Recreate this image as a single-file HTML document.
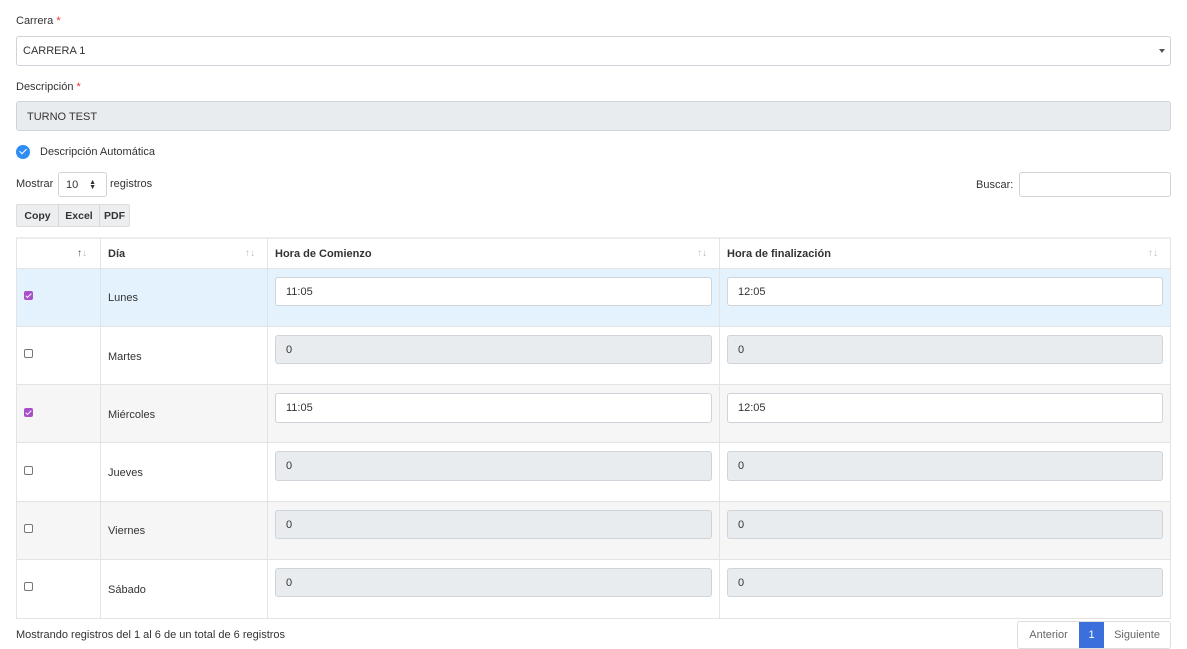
<!DOCTYPE html><html><head><style>
body{margin:0;width:1187px;height:649px;background:#fff;font-family:"Liberation Sans",sans-serif;color:#333;font-size:11px;position:relative;overflow:hidden}
.a{position:absolute}
.inp{position:absolute;box-sizing:border-box;border:1px solid #ced4da;border-radius:3px;background:#fff;font-size:11px;padding-left:10px;display:flex;align-items:center;color:#333}
.dis{background:#e9ecef}
.cb{position:absolute;width:9px;height:9px;border:1px solid #777;border-radius:2px;box-sizing:border-box;background:#fff}
.cb.on{background:#a94fc9;border-color:#a94fc9}
.cb.on:after{content:"";position:absolute;left:2px;top:0px;width:2px;height:5px;border:solid #fff;border-width:0 1.5px 1.5px 0;transform:rotate(45deg)}
.row{position:absolute;left:16px;width:1155px;border-bottom:1px solid #e3e3e3;box-sizing:border-box}
.vl{position:absolute;top:238px;height:380px;border-left:1px solid #e3e3e3}
.ar{position:absolute;color:#bbb;font-size:10px}
</style></head><body>
<div class="a" style="left:16px;top:15px">Carrera <span style="color:#e33">*</span></div>
<div class="inp" style="left:16px;top:36px;width:1155px;height:30px;padding-left:6px">CARRERA 1<span style="position:absolute;right:5px;top:12px;border:3px solid transparent;border-top:4px solid #555"></span></div>
<div class="a" style="left:16px;top:81px">Descripción <span style="color:#e33">*</span></div>
<div class="inp dis" style="left:16px;top:101px;width:1155px;height:30px;padding-top:1px">TURNO TEST</div>
<div class="a" style="left:16px;top:145px;width:14px;height:14px;border-radius:50%;background:#2f8cf5"><div style="position:absolute;left:5px;top:2px;width:3px;height:6px;border:solid #fff;border-width:0 1.5px 1.5px 0;transform:rotate(45deg)"></div></div>
<div class="a" style="left:40px;top:146px">Descripción Automática</div>
<div class="a" style="left:16px;top:178px">Mostrar</div>
<div class="inp" style="left:58px;top:172px;width:49px;height:25px;padding-left:7px">10<span style="position:absolute;right:10px;top:7px;font-size:7px;line-height:5px">▲<br>▼</span></div>
<div class="a" style="left:110px;top:178px">registros</div>
<div class="a" style="left:976px;top:179px">Buscar:</div>
<div class="inp" style="left:1019px;top:172px;width:152px;height:25px"></div>
<div class="a" style="left:16px;top:204px;width:114px;height:23px;background:#eceeef;border:1px solid #ddd;box-sizing:border-box;border-radius:2px;font-weight:bold;font-size:10.5px;display:flex">
<div style="width:41px;text-align:center;line-height:22px;border-right:1px solid #d6d6d6">Copy</div><div style="width:40px;text-align:center;line-height:22px;border-right:1px solid #d6d6d6">Excel</div><div style="flex:1;text-align:center;line-height:22px">PDF</div></div>
<div class="row" style="top:238px;height:31px"></div>
<div class="row" style="top:269px;height:58px;background:#e3f2fd"></div>
<div class="row" style="top:327px;height:58px"></div>
<div class="row" style="top:385px;height:58px;background:#f6f6f6"></div>
<div class="row" style="top:443px;height:59px"></div>
<div class="row" style="top:502px;height:58px;background:#f6f6f6"></div>
<div class="row" style="top:560px;height:58px;border:0"></div>
<div class="a" style="left:16px;top:237px;width:1155px;height:382px;border:1px solid #e3e3e3;box-sizing:border-box;border-top:2px solid #eee"></div>
<div class="vl" style="left:100px"></div><div class="vl" style="left:267px"></div><div class="vl" style="left:719px"></div>
<div class="ar" style="left:77px;top:248px"><span style="color:#444">↑</span>↓</div>
<div class="ar" style="left:245px;top:248px">↑↓</div><div class="ar" style="left:697px;top:248px">↑↓</div><div class="ar" style="left:1148px;top:248px">↑↓</div>
<div class="a" style="left:108px;top:248px;font-weight:bold">Día</div>
<div class="a" style="left:275px;top:248px;font-weight:bold">Hora de Comienzo</div>
<div class="a" style="left:727px;top:248px;font-weight:bold">Hora de finalización</div>
<div class="cb on" style="left:24px;top:291px"></div><div class="a" style="left:108px;top:292px">Lunes</div>
<div class="inp" style="left:275px;top:277px;width:437px;height:29px">11:05</div><div class="inp" style="left:727px;top:277px;width:436px;height:29px">12:05</div>
<div class="cb on" style="left:24px;top:408px"></div><div class="a" style="left:108px;top:409px">Miércoles</div>
<div class="cb" style="left:24px;top:349px"></div><div class="a" style="left:108px;top:351px">Martes</div>
<div class="inp dis" style="left:275px;top:335px;width:437px;height:29px">0</div><div class="inp dis" style="left:727px;top:335px;width:436px;height:29px">0</div>
<div class="inp" style="left:275px;top:393px;width:437px;height:30px">11:05</div><div class="inp" style="left:727px;top:393px;width:436px;height:30px">12:05</div>
<div class="cb" style="left:24px;top:466px"></div><div class="a" style="left:108px;top:467px">Jueves</div>
<div class="inp dis" style="left:275px;top:451px;width:437px;height:30px">0</div><div class="inp dis" style="left:727px;top:451px;width:436px;height:30px">0</div>
<div class="cb" style="left:24px;top:524px"></div><div class="a" style="left:108px;top:525px">Viernes</div>
<div class="inp dis" style="left:275px;top:510px;width:437px;height:29px">0</div><div class="inp dis" style="left:727px;top:510px;width:436px;height:29px">0</div>
<div class="cb" style="left:24px;top:582px"></div><div class="a" style="left:108px;top:584px">Sábado</div>
<div class="inp dis" style="left:275px;top:568px;width:437px;height:29px">0</div><div class="inp dis" style="left:727px;top:568px;width:436px;height:29px">0</div>
<div class="a" style="left:16px;top:629px">Mostrando registros del 1 al 6 de un total de 6 registros</div>
<div class="a" style="left:1017px;top:621px;width:154px;height:28px;border:1px solid #ddd;box-sizing:border-box;border-radius:3px;display:flex;color:#666">
<div style="width:61px;text-align:center;line-height:26px">Anterior</div><div style="width:25px;background:#3a6fdc;color:#fff;text-align:center;line-height:26px">1</div><div style="flex:1;text-align:center;line-height:26px">Siguiente</div></div>
</body></html>
